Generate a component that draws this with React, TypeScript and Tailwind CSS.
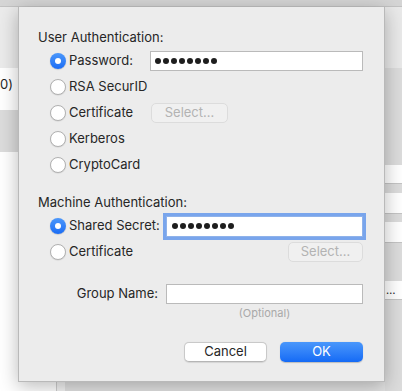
import React from "react";

const font = { fontFamily: "Inter, 'Helvetica Neue', Arial, sans-serif" };

function Radio({ checked }: { checked?: boolean }) {
  if (checked) {
    return (
      <span className="flex h-[16px] w-[16px] shrink-0 items-center justify-center rounded-full bg-gradient-to-b from-[#4b97fb] to-[#1b6cf4] shadow-[0_0.5px_1px_rgba(0,0,0,0.25)]">
        <span className="h-[6px] w-[6px] rounded-full bg-white" />
      </span>
    );
  }
  return (
    <span className="h-[16px] w-[16px] shrink-0 rounded-full border border-[#b1b1b1] bg-white shadow-[0_0.5px_1px_rgba(0,0,0,0.12)]" />
  );
}

function Dots() {
  return (
    <span className="flex items-center gap-[2px]">
      {Array.from({ length: 8 }).map((_, i) => (
        <span key={i} className="h-[6px] w-[6px] rounded-full bg-[#1e1e1e]" />
      ))}
    </span>
  );
}

function DisabledButton({ w }: { w: string }) {
  return (
    <span
      className={`flex h-[20px] ${w} items-center justify-center rounded-[5px] border border-[#dcdcdc] bg-[#f0f0f0] text-[13px] text-[#b3b3b3]`}
    >
      Select…
    </span>
  );
}

export default function App() {
  return (
    <div
      className="relative h-[391px] w-[402px] overflow-hidden bg-white text-[#262626]"
      style={font}
    >
      {/* Background window */}
      <div className="flex h-full flex-col">
        <div className="h-[7px] shrink-0 border-b border-[#c2c2c2] bg-[#d5d5d5]" />
        <div className="flex flex-1">
          {/* sidebar */}
          <div className="flex w-[57px] shrink-0 flex-col border-r border-[#cfcfcf]">
            <div className="h-[61px] bg-[#ebebeb]" />
            <div className="flex h-[42px] items-center justify-end overflow-hidden whitespace-nowrap bg-white pb-[9px] pr-[43px] text-[13px]">
              (en0)
            </div>
            <div className="h-[42px] bg-[#dcdcdc]" />
            <div className="flex-1 bg-white" />
          </div>
          {/* content */}
          <div className="flex flex-1">
            <div className="w-[8px] bg-[#f3f3f3]" />
            <div className="flex-1 bg-[#e2e2e2]" />
            <div className="flex w-[17px] shrink-0 flex-col">
              <div className="h-[61px] bg-[#e9e9e9]" />
              <div className="h-[97px] bg-[#dcdcdc]" />
              <div className="h-[19px] border-b border-[#c4c4c4] bg-white" />
              <div className="h-[9px] bg-[#dcdcdc]" />
              <div className="h-[21px] border-b border-[#c4c4c4] bg-white" />
              <div className="h-[8px] bg-[#dcdcdc]" />
              <div className="h-[21px] border-b border-[#c4c4c4] bg-white" />
              <div className="h-[38px] bg-[#dcdcdc]" />
              <div className="flex h-[19px] items-center border-b border-[#c4c4c4] bg-white pl-[1px] text-[11px] leading-none">
                …
              </div>
              <div className="flex-1 bg-[#dcdcdc]" />
            </div>
          </div>
        </div>
      </div>

      {/* Sheet dialog */}
      <div className="absolute left-[18px] top-[7px] flex h-[375px] w-[367px] flex-col border border-t-0 border-[#b9b9b9] bg-[#ececec] pl-[19px] pr-[21px] text-[13px] shadow-[0_4px_18px_rgba(0,0,0,0.28)]">
        <div className="mt-[22px] h-[16px] leading-[16px]">User Authentication:</div>

        <div className="mt-[3px] flex flex-col pl-[12px]">
          <div className="flex h-[26px] items-center">
            <Radio checked />
            <span className="ml-[3px] w-[82px]">Password:</span>
            <span className="flex h-[20px] w-[214px] items-center border border-[#bababa] bg-white pl-[4px]">
              <Dots />
            </span>
          </div>
          <div className="flex h-[26px] items-center">
            <Radio />
            <span className="ml-[3px]">RSA SecurID</span>
          </div>
          <div className="flex h-[26px] items-center">
            <Radio />
            <span className="ml-[3px] w-[82px]">Certificate</span>
            <DisabledButton w="w-[77px]" />
          </div>
          <div className="flex h-[26px] items-center">
            <Radio />
            <span className="ml-[3px]">Kerberos</span>
          </div>
          <div className="flex h-[26px] items-center">
            <Radio />
            <span className="ml-[3px]">CryptoCard</span>
          </div>
        </div>

        <div className="mt-[16px] h-[16px] leading-[16px]">Machine Authentication:</div>

        <div className="mt-[3px] flex flex-col pl-[12px]">
          <div className="flex h-[26px] items-center">
            <Radio checked />
            <span className="ml-[3px] w-[98px]">Shared Secret:</span>
            <span className="flex h-[21px] w-[198px] items-center border border-[#8fb2ea] bg-white pl-[5px] shadow-[0_0_0_3px_#79a5ec]">
              <Dots />
            </span>
          </div>
          <div className="flex h-[25px] items-center">
            <Radio />
            <span className="ml-[3px]">Certificate</span>
            <span className="ml-auto">
              <DisabledButton w="w-[75px]" />
            </span>
          </div>
        </div>

        <div className="mt-[20px] flex items-start">
          <span className="flex h-[20px] flex-1 items-center justify-end pr-[8px]">Group Name:</span>
          <div className="flex w-[197px] flex-col items-center">
            <span className="h-[20px] w-full border border-[#bababa] bg-white" />
            <span className="mt-[3px] text-[11px] leading-[12px] text-[#a9a9a9]">(Optional)</span>
          </div>
        </div>

        <div className="mb-[19px] mt-auto flex justify-end gap-[13px]">
          <span className="flex h-[20px] w-[83px] items-center justify-center rounded-[5px] border border-[#c9c9c9] border-b-[#b5b5b5] bg-white shadow-[0_0.5px_1px_rgba(0,0,0,0.1)]">
            Cancel
          </span>
          <span className="flex h-[20px] w-[83px] items-center justify-center rounded-[5px] bg-gradient-to-b from-[#4a97fb] to-[#146af5] text-white shadow-[0_0.5px_1px_rgba(0,0,0,0.2)]">
            OK
          </span>
        </div>
      </div>
    </div>
  );
}
